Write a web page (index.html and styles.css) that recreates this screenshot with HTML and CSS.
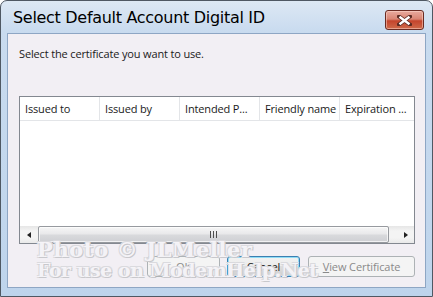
FILE: index.html
```html
<!DOCTYPE html>
<html>
<head>
<meta charset="utf-8">
<link rel="stylesheet" href="styles.css">
</head>
<body>
<div class="window">
  <div class="titlebar">
    <span class="title">Select Default Account Digital ID</span>
    <span class="close">
      <svg width="15" height="11" viewBox="0 0 15 11"><path d="M2 1.5 L13 9.5 M13 1.5 L2 9.5" stroke="#5a2a22" stroke-width="4" stroke-linecap="square"/><path d="M2.5 1.8 L12.5 9.2 M12.5 1.8 L2.5 9.2" stroke="#ffffff" stroke-width="2.4"/></svg>
    </span>
  </div>
  <div class="content">
    <p class="prompt">Select the certificate you want to use.</p>
    <div class="list">
      <div class="header">
        <div class="col">Issued to</div>
        <div class="col">Issued by</div>
        <div class="col">Intended P...</div>
        <div class="col">Friendly name</div>
        <div class="col last">Expiration ...</div>
      </div>
      <div class="rows"></div>
      <div class="hscroll">
        <div class="arrow"><span class="tri left"></span></div>
        <div class="track"><div class="thumb"><span class="grip"></span></div></div>
        <div class="arrow"><span class="tri right"></span></div>
      </div>
    </div>
    <div class="buttons">
      <button class="btn disabled ok">OK</button>
      <button class="btn focused cancel">Cancel</button>
      <button class="btn disabled view"><u>V</u>iew Certificate</button>
    </div>
  </div>
</div>
<div class="watermark">
  <div class="wm1">Photo © JLMeller</div>
  <div class="wm2">For use on ModemHelp.Net</div>
</div>
</body>
</html>
```
FILE: styles.css
```css
html, body {
  margin: 0;
  padding: 0;
  width: 433px;
  height: 297px;
  overflow: hidden;
  background: #ffffff;
}
body {
  position: relative;
  font-family: "Open Sans", "Noto Sans", sans-serif;
}
.window {
  box-sizing: border-box;
  width: 433px;
  height: 297px;
  border: 1px solid #4f5863;
  border-radius: 7px 7px 0 0;
  background: linear-gradient(180deg, #dde8f4 0px, #c9dbef 30px, #bed4ec 100%);
  padding: 0 6px 8px 6px;
  display: flex;
  flex-direction: column;
}
.titlebar {
  height: 32px;
  display: flex;
  align-items: flex-start;
  justify-content: space-between;
}
.title {
  margin-left: 6px;
  margin-top: 7px;
  font-family: "DejaVu Sans", sans-serif;
  font-size: 16px;
  line-height: 20px;
  color: #000;
  letter-spacing: -0.3px;
}
.close {
  box-sizing: border-box;
  margin-top: 9px;
  margin-right: 2px;
  width: 39px;
  height: 20px;
  border: 1px solid #6a2b22;
  border-radius: 3px;
  background: linear-gradient(180deg, #e8aa9e 0%, #d98573 45%, #c4442c 55%, #cf6a4a 100%);
  display: flex;
  align-items: center;
  justify-content: center;
  box-shadow: inset 0 0 0 1px rgba(255,220,210,0.5);
}
.close svg { display: block; }
.content {
  flex: 1;
  background: #f2eff4;
  border: 1px solid #8ea6c4;
  padding: 0 10px 9px 11px;
  display: flex;
  flex-direction: column;
}
.prompt {
  margin: 12px 0 0 0;
  font-size: 11px;
  letter-spacing: -0.15px;
  line-height: 16px;
  color: #1a1a1a;
  height: 16px;
}
.list {
  margin-top: 34px;
  height: 148px;
  box-sizing: border-box;
  border: 1px solid #838890;
  background: #ffffff;
  display: flex;
  flex-direction: column;
}
.header {
  display: flex;
  height: 24px;
  box-sizing: border-box;
  border-bottom: 1px solid #e3e5e8;
}
.col {
  box-sizing: border-box;
  width: 80px;
  flex: none;
  border-right: 1px solid #e3e5e8;
  padding-left: 5px;
  font-size: 11px;
  letter-spacing: -0.15px;
  line-height: 23px;
  color: #1a1a1a;
  white-space: nowrap;
  overflow: hidden;
}
.col.last { border-right: none; flex: 1; width: auto; }
.rows { flex: 1; }
.hscroll {
  height: 17px;
  display: flex;
  background: linear-gradient(180deg, #e6e6e6 0%, #f4f4f4 30%, #f4f4f4 70%, #e9e9e9 100%);
}
.arrow {
  width: 17px;
  flex: none;
  display: flex;
  align-items: center;
  justify-content: center;
}
.tri {
  width: 0;
  height: 0;
  border-top: 3.5px solid transparent;
  border-bottom: 3.5px solid transparent;
}
.tri.left { border-right: 4px solid #222; }
.tri.right { border-left: 4px solid #222; }
.track {
  flex: 1;
  display: flex;
  padding: 0 8px 0 1px;
}
.thumb {
  flex: 1;
  box-sizing: border-box;
  border: 1px solid #979a9f;
  border-radius: 2px;
  background: linear-gradient(180deg, #f6f6f6 0%, #e9e9eb 45%, #d8d9dc 55%, #cfd0d4 100%);
  display: flex;
  align-items: center;
  justify-content: center;
  box-shadow: inset 0 0 0 1px rgba(255,255,255,0.7);
}
.grip {
  width: 7px;
  height: 7px;
  background: repeating-linear-gradient(90deg, #4d4d4d 0 1px, transparent 1px 3px);
}
.buttons {
  margin-top: 12px;
  display: flex;
  justify-content: flex-end;
  gap: 7px;
}
.btn {
  box-sizing: border-box;
  height: 21px;
  margin: 0;
  padding: 0;
  font-family: "Open Sans", "Noto Sans", sans-serif;
  font-size: 11px;
  letter-spacing: -0.1px;
  line-height: 18px;
  border-radius: 3px;
  border: 1px solid #707070;
  background: linear-gradient(180deg, #f2f2f2 0%, #ebebeb 49%, #dddddd 50%, #cfcfcf 100%);
  color: #1a1a1a;
}
.btn u { text-decoration: underline; }
.ok { width: 73px; }
.cancel { width: 73px; }
.view { width: 107px; margin-left: 1px; }
.btn.disabled {
  border-color: #adb2b5;
  background: #f4f4f4;
  color: #8a8a8a;
}
.btn.focused {
  border-color: #3c7fb1;
  box-shadow: inset 0 0 0 1px #8fdcf6;
}
.watermark {
  position: absolute;
  left: 37px;
  top: 239px;
  font-family: "DejaVu Serif", serif;
  font-weight: bold;
  font-size: 19px;
  line-height: 21px;
  color: rgba(250, 248, 252, 0.9);
  text-shadow: 1px 1px 0 #c8c8cc, -1px -1px 0 #dadade, 1px -1px 0 #dadade, -1px 1px 0 #dadade;
  pointer-events: none;
}
.wm1 { font-size: 21px; letter-spacing: 0.6px; }
.wm2 { letter-spacing: -0.5px; }
```
